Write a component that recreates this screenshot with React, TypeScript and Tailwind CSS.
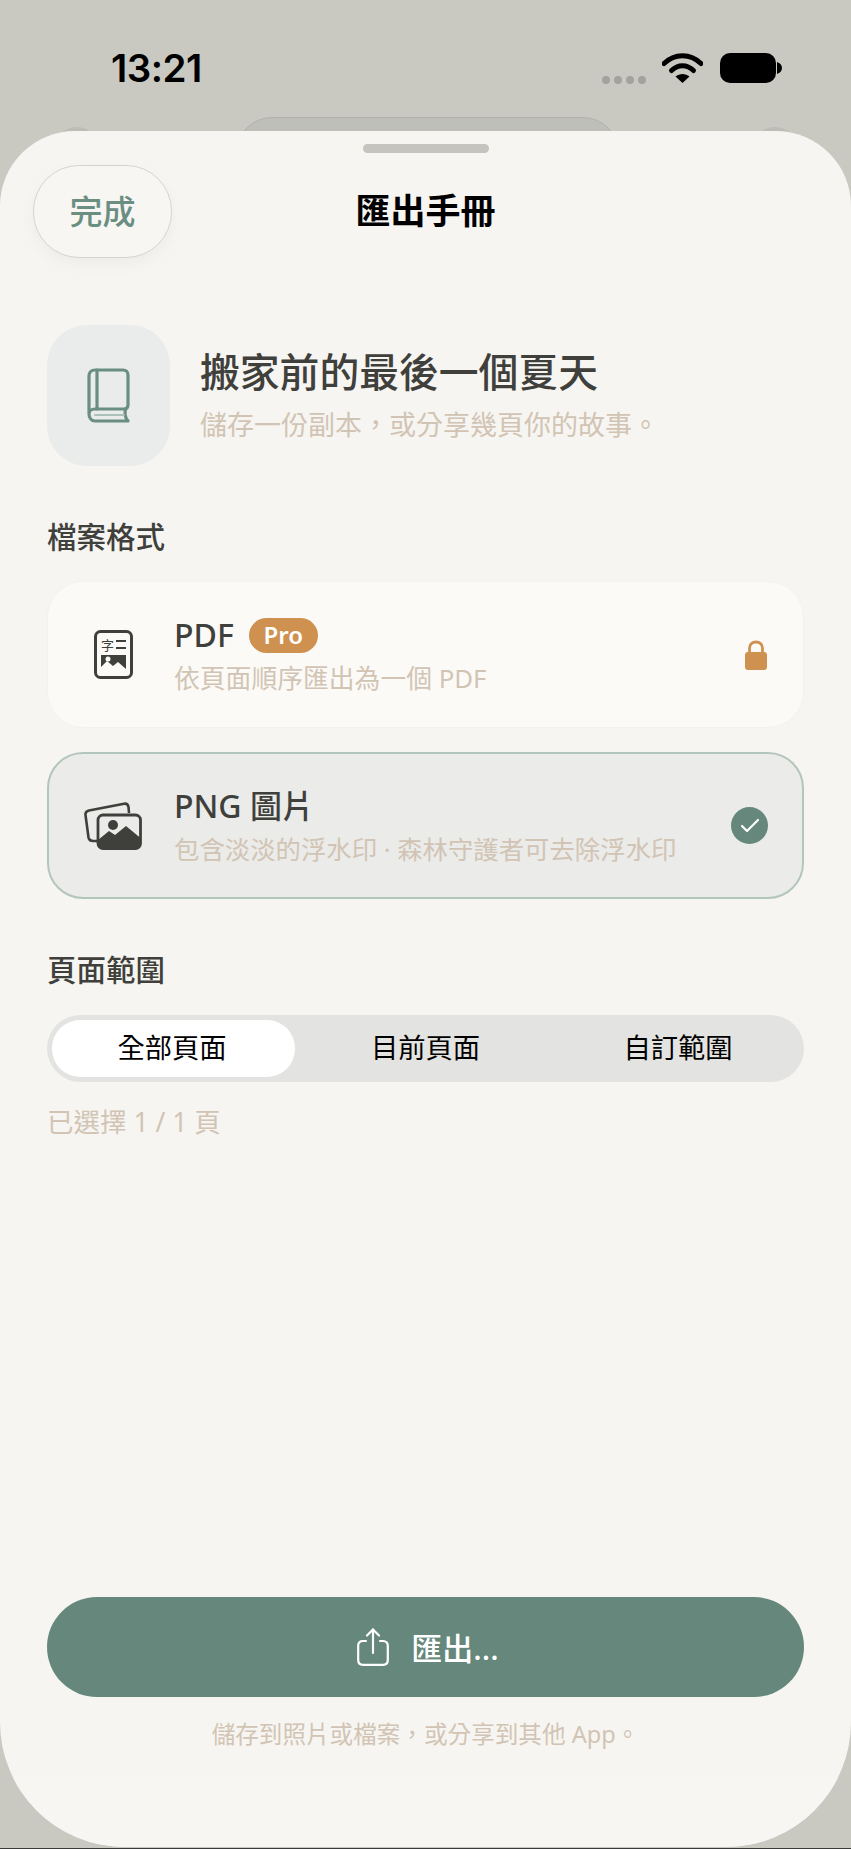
import React from "react";
import { Check } from "lucide-react";

const cjk = "font-['Noto_Sans','Noto_Sans_CJK_TC',sans-serif]";

function StatusIcons() {
    return (
        <div className="flex items-center">
            <div className="flex gap-[4px] mt-[25px] mr-[16px]">
                <span className="w-[8px] h-[8px] rounded-full bg-[#a3a29d]" />
                <span className="w-[8px] h-[8px] rounded-full bg-[#a3a29d]" />
                <span className="w-[8px] h-[8px] rounded-full bg-[#a3a29d]" />
                <span className="w-[8px] h-[8px] rounded-full bg-[#a3a29d]" />
            </div>
            <svg width="41" height="31" viewBox="0 0 41 31" className="mr-[17px]">
                <path d="M2 11.5C12.5 1 28.5 1 39 11.5" fill="none" stroke="#000" strokeWidth="5" strokeLinecap="round" />
                <path d="M9.5 18.5C16 12 25 12 31.5 18.5" fill="none" stroke="#000" strokeWidth="5" strokeLinecap="round" />
                <path d="M20.5 31L13.5 24.5C17.5 21 23.5 21 27.5 24.5Z" fill="#000" />
            </svg>
            <svg width="62" height="30" viewBox="0 0 62 30">
                <rect x="0" y="0" width="56" height="30" rx="10" fill="#000" />
                <path d="M57 9C60 10 62 12 62 15C62 18 60 20 57 21Z" fill="#000" />
            </svg>
        </div>
    );
}

function BookIcon() {
    return (
        <svg width="43" height="55" viewBox="0 0 43 55" fill="none" stroke="#6a8f82" strokeWidth="3.2" strokeLinejoin="round" strokeLinecap="round">
            <path d="M2 46V8C2 4.5 4.5 2 8 2H36C39 2 41 4 41 7V37C41 39.5 39.5 41 37 41H8C4.5 41 2 43 2 46C2 50 4.5 53 8 53H41C38.5 50.5 37.5 46 38.5 41" />
            <path d="M10 2V41" />
            <path d="M8 47H37" strokeWidth="2" stroke="#a9c1b8" />
        </svg>
    );
}

function PdfIcon() {
    return (
        <svg width="39" height="49" viewBox="0 0 39 49" fill="none">
            <rect x="1.5" y="1.5" width="36" height="46" rx="5" stroke="#3f3f3c" strokeWidth="3" />
            <text x="7" y="20" fontSize="13" fill="#3f3f3c" fontFamily="Noto Sans CJK TC, sans-serif">字</text>
            <rect x="22" y="10" width="10" height="2" fill="#3f3f3c" />
            <rect x="22" y="17" width="10" height="2" fill="#3f3f3c" />
            <path d="M7 25H32V39L24 32L19 36L13 31L7 37Z" fill="#3f3f3c" />
            <circle cx="14" cy="29" r="2.5" fill="#fbfaf7" />
        </svg>
    );
}

function ImagesIcon() {
    return (
        <svg width="58" height="48" viewBox="0 0 58 48" fill="none">
            <path d="M13 39L9 39C6.5 39 5 38 4.5 35.5L1.5 13C1.2 10.5 2.5 9 5 8.5L40 1.7C42.5 1.3 44 2.5 44.5 5L45 11" stroke="#3f3f3c" strokeWidth="2.6" />
            <rect x="14" y="13" width="42.5" height="33.5" rx="5" stroke="#3f3f3c" strokeWidth="2.8" />
            <path d="M14 38L25 29L31 33L42 24L56.5 36V42C56.5 45 55 46.5 52 46.5H19C16 46.5 14 45 14 42Z" fill="#3f3f3c" />
            <circle cx="29" cy="23" r="5" fill="#3f3f3c" />
        </svg>
    );
}

function LockIcon() {
    return (
        <svg width="22" height="30" viewBox="0 0 22 30" className="shrink-0">
            <path d="M4.5 13V8.5C4.5 4.5 7 2 11 2C15 2 17.5 4.5 17.5 8.5V13" fill="none" stroke="#cf9150" strokeWidth="2.8" />
            <rect x="0" y="12" width="22" height="18" rx="3" fill="#cf9150" />
        </svg>
    );
}

function ShareIcon() {
    return (
        <svg width="32" height="38" viewBox="0 0 32 38" fill="none" stroke="#fff" strokeWidth="2.2" strokeLinecap="round" strokeLinejoin="round" className="shrink-0">
            <path d="M9 13H6C3 13 1.2 14.8 1.2 17.8V32C1.2 35 3 36.8 6 36.8H26C29 36.8 30.8 35 30.8 32V17.8C30.8 14.8 29 13 26 13H23" />
            <path d="M16 25V1.5" />
            <path d="M10 7.5L16 1.5L22 7.5" />
        </svg>
    );
}

export default function App() {
    return (
        <div className={`w-[851px] h-[1849px] bg-[#c9c8c1] overflow-hidden flex flex-col relative ${cjk}`}>
            {/* status bar, with the page under the sheet peeking out */}
            <div className="h-[131px] shrink-0 relative">
                <div className="absolute left-[236px] top-[117px] w-[383px] h-[40px] rounded-t-[36px] bg-[#bfbfb9] border border-[#b2b2ac]" />
                <div className="absolute left-[54px] top-[127px] w-[46px] h-[46px] rounded-full bg-[#bdbcb6]" />
                <div className="absolute left-[752px] top-[127px] w-[46px] h-[46px] rounded-full bg-[#bdbcb6]" />
                <div className="flex items-start justify-between pl-[111px] pr-[69px] pt-[49px]">
                    <span className="text-[38.5px] leading-[38px] font-semibold text-black font-['Inter',sans-serif] tracking-[-0.5px]">13:21</span>
                    <div className="mt-[2px]">
                        <StatusIcons />
                    </div>
                </div>
            </div>

            <div className="relative h-[1716px] shrink-0 bg-[#f6f5f1] rounded-t-[75px] rounded-b-[125px] flex flex-col overflow-hidden">
                <div className="w-[126px] h-[9px] rounded-full bg-[#c5c4bf] mx-auto mt-[13px] shrink-0" />

                <div className="grid grid-cols-[1fr_auto_1fr] items-center px-[33px] mt-[12px] shrink-0">
                    <div className="w-[139px] h-[93px] rounded-[46px] border border-[#d4d4cf] bg-[#f7f6f3] shadow-[0_6px_16px_rgba(0,0,0,0.04)] flex items-center justify-center text-[33px] font-medium text-[#6a8f82]">
                        完成
                    </div>
                    <h1 className="text-[35px] font-semibold text-black">匯出手冊</h1>
                    <div />
                </div>

                <div className="px-[47px] flex flex-col flex-1">
                    <div className="flex items-center mt-[67px] shrink-0">
                        <div className="w-[123px] h-[141px] rounded-[40px] bg-[#e9ecea] flex items-center justify-center">
                            <BookIcon />
                        </div>
                        <div className="ml-[30px] pb-[2.5px]">
                            <div className="text-[39.8px] leading-[52px] font-medium text-[#3f3f3c]">搬家前的最後一個夏天</div>
                            <div className="text-[27px] leading-[36px] mt-[8.5px] text-[#d2c4b4]">儲存一份副本，或分享幾頁你的故事。</div>
                        </div>
                    </div>

                    <div className="text-[29.5px] leading-[36px] font-medium text-[#3f3f3c] mt-[53px]">檔案格式</div>

                    <div className="h-[147px] mt-[26px] rounded-[36px] bg-[#fbfaf7] border border-[#f3f2ee] flex items-center pl-[46px] pr-[36px]">
                        <PdfIcon />
                        <div className="ml-[41px] flex-1">
                            <div className="flex items-center h-[44px]">
                                <span className="text-[32px] font-medium text-[#3f3f3c]">PDF</span>
                                <span className="ml-[15px] w-[69px] h-[35px] rounded-full bg-[#cf9150] text-white text-[24px] font-semibold flex items-center justify-center">Pro</span>
                            </div>
                            <div className="text-[25.8px] leading-[36px] text-[#d2c4b4] mt-[3px]">依頁面順序匯出為一個 PDF</div>
                        </div>
                        <LockIcon />
                    </div>

                    <div className="h-[147px] mt-[24px] rounded-[36px] bg-[#ebebe9] border-2 border-[#b3c6be] flex items-center pl-[35px] pr-[34px]">
                        <ImagesIcon />
                        <div className="ml-[32px] flex-1">
                            <div className="text-[32px] leading-[44px] font-medium text-[#3f3f3c]">PNG 圖片</div>
                            <div className="text-[25.4px] leading-[36px] text-[#d2c4b4] mt-[3px] whitespace-nowrap">包含淡淡的浮水印 · 森林守護者可去除浮水印</div>
                        </div>
                        <div className="w-[37px] h-[37px] rounded-full bg-[#66877b] flex items-center justify-center shrink-0">
                            <Check size={24} stroke="#fff" strokeWidth={2.2} />
                        </div>
                    </div>

                    <div className="text-[29.5px] leading-[36px] font-medium text-[#3f3f3c] mt-[53px]">頁面範圍</div>

                    <div className="h-[67px] mt-[27px] rounded-full bg-[#e3e3e1] grid grid-cols-[248px_251px_248px] items-center text-[27.3px] text-black px-[5px]">
                        <div className="h-[57px] rounded-[28px] bg-white flex items-center justify-center mr-[5px] pr-[3px]">全部頁面</div>
                        <div className="text-center">目前頁面</div>
                        <div className="text-center pl-[6px]">自訂範圍</div>
                    </div>

                    <div className="text-[26.5px] leading-[32px] text-[#d2c4b4] mt-[24px]">已選擇 1 / 1 頁</div>

                    <div className="flex-1" />

                    <div className="h-[100px] rounded-[52px] bg-[#66877b] flex items-center justify-center text-white pl-[5px]">
                        <ShareIcon />
                        <span className="ml-[22px] pt-[3px] text-[31px] font-medium">匯出...</span>
                    </div>

                    <div className="text-[23.6px] leading-[32px] text-center text-[#d2c4b4] mt-[21px] mb-[27px]">儲存到照片或檔案，或分享到其他 App。</div>
                </div>
                <div className="h-[70px] shrink-0 bg-[#f7f6f3]" />
            </div>
            <div className="h-px mt-px bg-[#3a3a38]" />
        </div>
    );
}
